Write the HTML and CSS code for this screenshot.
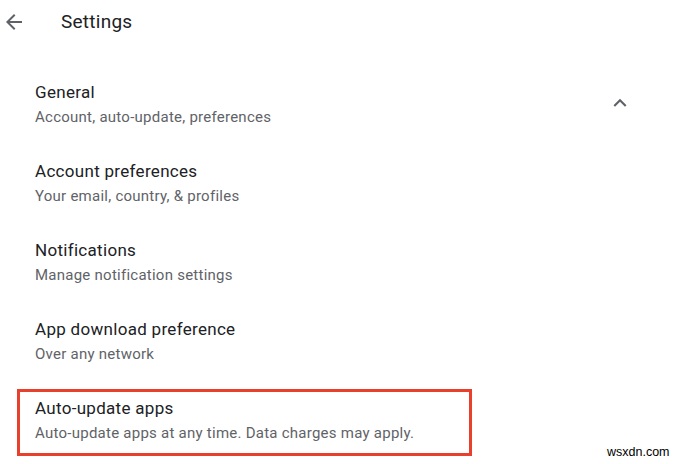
FILE: index.html
```html
<!DOCTYPE html>
<html>
<head>
<meta charset="utf-8">
<link rel="stylesheet" href="styles.css">
</head>
<body>
<div class="page">
  <header class="topbar">
    <svg class="back" viewBox="0 0 24 24" width="24" height="24"><path d="M20 11H7.83l5.59-5.59L12 4l-8 8 8 8 1.41-1.41L7.83 13H20v-2z" fill="#5f6368"/></svg>
    <h1 class="title">Settings</h1>
  </header>
  <ul class="list">
    <li class="row">
      <div class="texts">
        <div class="primary">General</div>
        <div class="secondary">Account, auto-update, preferences</div>
      </div>
      <svg class="chev" viewBox="0 0 24 24" width="26" height="26"><path d="M12 8l-6 6 1.41 1.41L12 10.83l4.59 4.58L18 14z" fill="#5f6368"/></svg>
    </li>
    <li class="row">
      <div class="texts">
        <div class="primary">Account preferences</div>
        <div class="secondary">Your email, country, &amp; profiles</div>
      </div>
    </li>
    <li class="row">
      <div class="texts">
        <div class="primary">Notifications</div>
        <div class="secondary">Manage notification settings</div>
      </div>
    </li>
    <li class="row">
      <div class="texts">
        <div class="primary">App download preference</div>
        <div class="secondary">Over any network</div>
      </div>
    </li>
    <li class="row highlighted">
      <div class="texts">
        <div class="primary">Auto-update apps</div>
        <div class="secondary">Auto-update apps at any time. Data charges may apply.</div>
      </div>
      <div class="mark"></div>
    </li>
  </ul>
  <div class="watermark">wsxdn.com</div>
</div>
</body>
</html>
```
FILE: styles.css
```css
html, body {
  margin: 0;
  padding: 0;
  background: #ffffff;
}
.page {
  position: relative;
  width: 680px;
  height: 464px;
  overflow: hidden;
  font-family: Roboto, "Noto Sans", sans-serif;
}
.topbar {
  height: 44px;
  display: flex;
  align-items: center;
  padding-left: 2px;
}
.back {
  display: block;
  flex: none;
}
.title {
  margin: 0 0 0 35px;
  font-size: 19px;
  font-weight: 400;
  letter-spacing: 0.25px;
  color: #202124;
  line-height: 24px;
}
.list {
  list-style: none;
  margin: 0;
  padding: 24px 0 0 0;
}
.row {
  position: relative;
  height: 79px;
  box-sizing: border-box;
  padding: 12px 0 0 35px;
  display: flex;
  align-items: flex-start;
}
.texts {
  flex: 1;
}
.primary {
  font-size: 17px;
  line-height: 24px;
  letter-spacing: 0.3px;
  color: #202124;
}
.secondary {
  margin-top: 3px;
  font-size: 15px;
  line-height: 20px;
  letter-spacing: 0.25px;
  color: #5f6368;
}
.chev {
  display: block;
  flex: none;
  margin: 10px 47px 0 0;
}
.mark {
  position: absolute;
  left: 17px;
  top: 5px;
  width: 455px;
  height: 67px;
  box-sizing: border-box;
  border: 3px solid #e8402d;
}
.watermark {
  position: absolute;
  left: 607px;
  top: 445px;
  font-family: "Liberation Sans", Arial, sans-serif;
  font-size: 12.5px;
  color: #000;
}
```
